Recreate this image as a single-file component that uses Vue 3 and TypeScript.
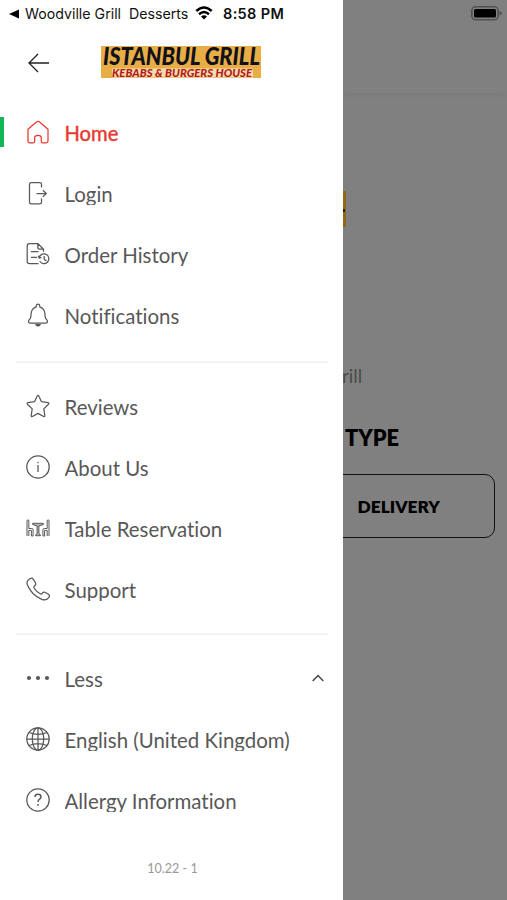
<script setup lang="ts">
interface MenuItem {
  label: string
  icon: string
  active?: boolean
  expanded?: boolean
}

const groups: MenuItem[][] = [
  [
    { label: 'Home', icon: 'home', active: true },
    { label: 'Login', icon: 'login' },
    { label: 'Order History', icon: 'orders' },
    { label: 'Notifications', icon: 'bell' },
  ],
  [
    { label: 'Reviews', icon: 'star' },
    { label: 'About Us', icon: 'info' },
    { label: 'Table Reservation', icon: 'table' },
    { label: 'Support', icon: 'phone' },
  ],
  [
    { label: 'Less', icon: 'dots', expanded: true },
    { label: 'English (United Kingdom)', icon: 'globe' },
    { label: 'Allergy Information', icon: 'help' },
  ],
]

const icons: Record<string, string> = {
  home: '<path d="M2 9.200 10.700 1.800Q12 .8 13.300 1.800L22 9.200V21q0 1.800-1.800 1.800h-3.700q-1.200 0-1.200-1.200v-4.100q0-2.200-3.300-2.200t-3.300 2.200v4.100q0 1.200-1.200 1.200H3.800Q2 22.800 2 21Z"/>',
  login: '<path d="M15.500 6.500V3.200q0-1.700-1.700-1.700H5.200q-1.700 0-1.700 1.700v18q0 1.700 1.700 1.700h8.600q1.700 0 1.700-1.700V17.500M10.500 12.500h9.700M16.800 9.100 20.300 12.500l-3.500 3.400"/>',
  orders: '<path d="M12.500 21.500H3.500q-2.300 0-2.300-2.300V4Q1.200 1.500 3.500 1.500h8.300l5.700 5.700v2.600M11.800 1.500v3.800q0 1.900 1.900 1.900h3.800M5 9.700h7.500M5 15.300h6"/><path d="M13.300 15a4.900 4.900 0 1 1 .4 4.200M12.200 13.800l1 2.300 2.300-.7M18.200 14v3.200l2.200 1.700"/>',
  bell: '<path d="M10.300 3.800V2.700q0-1.500 1.700-1.500t1.700 1.500v1.100q4.800 1.400 5.200 7 0 4.700 2.200 6.500 1.200 2.700-1.200 2.700H4.100q-2.400 0-1.200-2.700 2.200-1.800 2.200-6.500 .4-5.600 5.200-7Z"/><path d="M9.800 21.500q2.200 2.600 4.400 0Z" fill="currentColor"/>',
  star: '<path d="M11.200 2q.8-1.300 1.600 0l2.700 5.700 6.600 1q1.300.4.4 1.500l-4.700 4.700 1 6.600q0 1.500-1.200 1L12 19.400l-5.600 3.100q-1.200.5-1.200-1l1-6.600L1.500 10.200q-.9-1.100.4-1.500l6.600-1Z"/>',
  info: '<circle cx="12" cy="12" r="11.200"/><path d="M12 10v7M12 6.700v1.600"/>',
  table: '<g stroke-width="1"><path d="M1 20V5q0-1.200.9-1.200T2.800 5v7.500h3q1.300 0 1.300 1.300V20H5.400v-5.600H2.800V20M23 20V5q0-1.200-.9-1.200T21.200 5v7.500h-3q-1.300 0-1.300 1.300V20h1.700v-5.600h2.600V20"/><path d="M6.700 7.300h10.600v1.300l-4.400 1.200v8.100l1.500.9v.9H9.600v-.9l1.500-.9V9.800L6.700 8.600Z" fill="currentColor" fill-opacity=".4"/></g>',
  phone: '<path d="M2.300 2.900 4.200 1.600q1.900-1.100 3.100.7l2 3.200q1 1.800-.5 3.100-1.500 1.200-.4 2.900 2.300 3.600 5.800 5.300 1.100.6 2-.5 1.400-1.700 3.200-.8l3 1.700q1.800 1.200.5 3.100-2.500 3.700-7 2.100Q5.600 18.100 1.200 7.400.4 4.400 2.300 2.900Z"/>',
  dots: '<g fill="currentColor" stroke="none"><circle cx="3" cy="12" r="2.100"/><circle cx="12" cy="12" r="2.100"/><circle cx="21" cy="12" r="2.100"/></g>',
  globe: '<circle cx="12" cy="12" r="11.200"/><ellipse cx="12" cy="12" rx="5.700" ry="11.200"/><path d="M12 .8v22.400M.8 12h22.400M3 5.500q9 3.600 18 0M3 18.500q9-3.600 18 0"/>',
  help: '<circle cx="12" cy="12" r="11.200"/><path d="M9 8.900Q9 6.300 12 6.300t3 2.600q0 1.300-1.400 2.200-1.600 1-1.600 2.900M12 16v1.700" stroke-width="1.500"/>',
}
</script>

<template>
  <div class="screen">
    <aside class="drawer">
      <div class="status">
        <svg class="back-tri" viewBox="0 0 10 10"><path d="M0 5 10 .5v9Z" /></svg>
        <span class="crumb">Woodville Grill</span>
        <span class="crumb second">Desserts</span>
        <svg class="wifi" viewBox="0 0 18 14">
          <path d="M1.300 5Q9-2 16.700 5M4 8.200q5-4.300 10 0" />
          <path class="fill" d="m6 10.400q3-2.500 6 0L9 13.600Z" />
        </svg>
        <span class="time">8:58 PM</span>
      </div>

      <header class="head">
        <svg class="arrow" viewBox="0 0 22 20"><path d="M21 10H1.200M10 1 1 10l9 9" /></svg>
        <svg class="logo" viewBox="0 0 160 32">
          <rect width="160" height="32" fill="#e8ae46" />
          <path d="M11 22.500H152V31.500H11Z" fill="#f6dcae" />
          <text class="logo-main" x="2" y="18.800" textLength="157" lengthAdjust="spacingAndGlyphs">ISTANBUL GRILL</text>
          <text class="logo-sub" x="11" y="31" textLength="140" lengthAdjust="spacingAndGlyphs">KEBABS &amp; BURGERS HOUSE</text>
        </svg>
      </header>

      <nav>
        <ul v-for="(group, i) in groups" :key="i" class="group">
          <li v-for="item in group" :key="item.label" class="item" :class="{ active: item.active }">
            <svg class="icon" viewBox="0 0 24 24" v-html="icons[item.icon]" />
            <span class="label">{{ item.label }}</span>
            <svg v-if="item.expanded" class="chevron" viewBox="0 0 12 8"><path d="M.7 7 6 1.500 11.300 7" /></svg>
          </li>
        </ul>
      </nav>
      <footer class="version">10.22 - 1</footer>
    </aside>

    <main class="page">
      <div class="topbar">
        <svg class="battery" viewBox="0 0 31 15">
          <rect x=".8" y=".8" width="26.400" height="13" rx="4" fill="none" stroke="#515151" stroke-width="1.600" />
          <rect x="3" y="3" width="22" height="8.600" rx="1.500" />
          <path d="M28.500 5q2.500.8 2.500 2.300t-2.500 2.300Z" fill="#515151" />
        </svg>
      </div>
      <div class="banner"><i></i></div>
      <p class="place">rill</p>
      <h2>TYPE</h2>
      <button type="button">DELIVERY</button>
    </main>
  </div>
</template>

<style>
body {
  margin: 0;
}
</style>

<style scoped>
.screen {
  display: flex;
  width: 507px;
  height: 900px;
  overflow: hidden;
  font-family: Lato, sans-serif;
}
.drawer {
  width: 343px;
  flex: none;
  background: #fff;
}
.status {
  display: flex;
  align-items: center;
  height: 27px;
  padding-left: 9px;
  font-family: Inter, sans-serif;
  font-size: 14.200px;
  color: #111;
  white-space: nowrap;
}
.back-tri {
  width: 10px;
  height: 10px;
  margin-right: 6px;
}
.crumb {
  width: 104px;
}
.crumb.second {
  width: 66px;
}
.wifi {
  width: 18px;
  height: 14px;
  margin: 0 10px 1px 0;
  fill: none;
  stroke: #000;
  stroke-width: 2.500;
}
.wifi .fill {
  fill: #000;
  stroke: none;
}
.time {
  font-weight: 600;
  font-size: 14.500px;
  letter-spacing: 0.35px;
  line-height: 17px;
}
.head {
  display: flex;
  align-items: flex-start;
  height: 75px;
  padding: 19px 0 0 28px;
  box-sizing: border-box;
}
.arrow {
  width: 22px;
  height: 20px;
  margin: 7px 51px 0 0;
  fill: none;
  stroke: #222;
  stroke-width: 1.300;
}
.logo {
  width: 160px;
  height: 32px;
  overflow: visible;
}
.logo-main {
  font: italic 900 24px Lato, sans-serif;
  fill: #11101c;
}
.logo-sub {
  font: italic 900 11.500px Lato, sans-serif;
  fill: #b11a22;
}
.group {
  margin: 0;
  padding: 0;
  list-style: none;
}
.group + .group {
  position: relative;
  padding-top: 30px;
}
.group + .group::before {
  content: '';
  position: absolute;
  top: 15px;
  left: 16px;
  width: 312px;
  height: 2px;
  background: #f3f3f3;
}
.group + .group + .group {
  padding-top: 28px;
}
.group + .group + .group::before {
  top: 13px;
}
.item {
  display: flex;
  align-items: center;
  height: 61px;
  padding: 0 19px 0 25.500px;
  position: relative;
  box-sizing: border-box;
  color: #585858;
}
.item.active {
  color: #e8392f;
}
.item.active::before {
  content: '';
  position: absolute;
  left: 0;
  top: 15px;
  width: 4px;
  height: 30px;
  background: #12b755;
}
.icon {
  width: 24px;
  height: 24px;
  margin: 0 15.500px 1px 0;
  flex: none;
  fill: none;
  stroke: currentColor;
  stroke-width: 1.250;
  stroke-linejoin: round;
}
.label {
  flex: 1;
  height: 23px;
  margin: 0 0 0 -0.500px;
  line-height: 25px;
  font-size: 20.450px;
  font-variant-ligatures: none;
  overflow: hidden;
  white-space: nowrap;
}
.active .label {
  font-size: 20.200px;
  -webkit-text-stroke: 0.4px currentColor;
}
.chevron {
  width: 12px;
  height: 8px;
  margin-bottom: 2px;
  fill: none;
  stroke: #444;
  stroke-width: 1.500;
}
.version {
  margin: 29px 0 0 2px;
  line-height: 18px;
  text-align: center;
  font-size: 12.600px;
  color: #999;
}
.page {
  flex: 1;
  display: flex;
  flex-direction: column;
  background: #808080;
  overflow: hidden;
  color: #000;
}
.topbar {
  display: flex;
  justify-content: flex-end;
  align-items: flex-start;
  height: 93px;
  padding: 6px 5px 0 0;
  box-sizing: border-box;
  box-shadow: 0 3px 5px rgba(0, 0, 0, 0.04);
}
.battery {
  width: 31px;
  height: 15px;
}
.banner {
  width: 3px;
  height: 36px;
  margin-top: 98px;
  padding-top: 18px;
  box-sizing: border-box;
  background: #936518;
}
.banner i {
  display: block;
  width: 2px;
  height: 3px;
  background: #211b22;
}
.place {
  margin: 137px 0 0 -1px;
  line-height: 24px;
  font-size: 18.800px;
  color: #4b4b4b;
}
h2 {
  margin: 35px 0 0 2px;
  line-height: 30px;
  font-size: 21.700px;
  font-weight: 800;
}
button {
  width: 154px;
  height: 64px;
  margin: 21px 0 0 -2px;
  padding: 0 54px 0 0;
  border: 1.500px solid #111;
  border-radius: 0 10px 10px 0;
  background: none;
  font: 800 17.400px Lato, sans-serif;
  color: #000;
  text-align: right;
}
</style>
